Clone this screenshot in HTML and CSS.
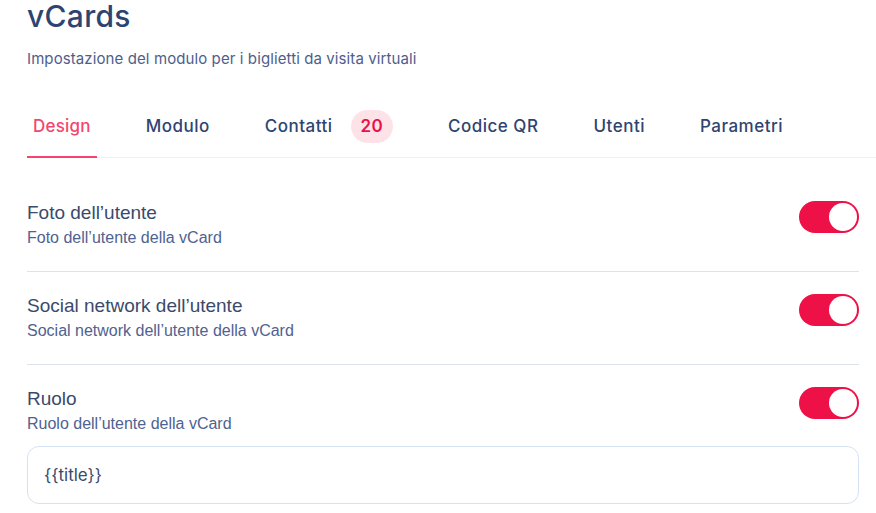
FILE: index.html
```html
<!DOCTYPE html>
<html lang="it">
<head>
<meta charset="utf-8">
<title>vCards</title>
<link rel="stylesheet" href="styles.css">
</head>
<body>
<main class="page">
  <header class="head">
    <h1 class="title">vCards</h1>
    <p class="subtitle">Impostazione del modulo per i biglietti da visita virtuali</p>
  </header>

  <nav class="tabs">
    <a class="tab active">Design</a>
    <a class="tab">Modulo</a>
    <a class="tab">Contatti <span class="badge">20</span></a>
    <a class="tab">Codice QR</a>
    <a class="tab">Utenti</a>
    <a class="tab">Parametri</a>
  </nav>

  <section class="settings">
    <div class="row">
      <div class="text">
        <div class="label">Foto dell’utente</div>
        <div class="desc">Foto dell’utente della vCard</div>
      </div>
      <span class="toggle on"><span class="knob"></span></span>
    </div>
    <div class="row">
      <div class="text">
        <div class="label">Social network dell’utente</div>
        <div class="desc">Social network dell’utente della vCard</div>
      </div>
      <span class="toggle on"><span class="knob"></span></span>
    </div>
    <div class="row last">
      <div class="main">
        <div class="top">
          <div class="text">
            <div class="label">Ruolo</div>
            <div class="desc">Ruolo dell’utente della vCard</div>
          </div>
          <span class="toggle on"><span class="knob"></span></span>
        </div>
        <div class="input">{{title}}</div>
      </div>
    </div>
  </section>
</main>
</body>
</html>
```

FILE: styles.css
```css
* { box-sizing: border-box; }
html, body { margin: 0; padding: 0; background: #ffffff; }
body { font-family: Inter, "Open Sans", sans-serif; overflow: hidden; }

.page {
  width: 832px;
  margin-left: 27px;
}

.title {
  margin: 0;
  font-size: 30px;
  line-height: 32px;
  font-weight: 500;
  color: #2e4470;
  letter-spacing: 0.3px;
}

.subtitle {
  margin: 17px 0 0;
  font-size: 15px;
  line-height: 20px;
  color: #4d5e8c;
  letter-spacing: 0.1px;
}

.tabs {
  margin-top: 31px;
  margin-right: -17px;
  display: flex;
  gap: 43px;
  border-bottom: 1px solid #edf0f6;
}

.tab {
  display: flex;
  align-items: center;
  gap: 18px;
  height: 58px;
  padding: 0 6px 4px;
  margin-bottom: -1px;
  border-bottom: 2px solid transparent;
  font-size: 17px;
  font-weight: 500;
  letter-spacing: 0.5px;
  color: #2f4470;
}

.tab.active {
  color: #f4466c;
  border-bottom-color: #f4466c;
  letter-spacing: 0.2px;
}

.badge {
  display: inline-flex;
  align-items: center;
  justify-content: center;
  height: 33px;
  padding: 0 10px;
  border-radius: 17px;
  background: #fde3e7;
  color: #e8124a;
  font-weight: 600;
  font-size: 17px;
  letter-spacing: 0.3px;
}

.settings { margin-top: 21px; }

.row {
  display: flex;
  justify-content: space-between;
  align-items: flex-start;
  padding: 22px 0 22px;
  border-bottom: 1px solid #dde3ee;
}

.row.last { border-bottom: none; padding-bottom: 0; }

.main { flex: 1; }
.top { display: flex; justify-content: space-between; align-items: flex-start; }

.label {
  font-family: "Liberation Sans", Arial, sans-serif;
  font-size: 19px;
  line-height: 24px;
  color: #3a4a6c;
}

.desc {
  margin-top: 2px;
  font-family: "Liberation Sans", Arial, sans-serif;
  font-size: 16px;
  line-height: 22px;
  color: #4f6290;
}

.toggle {
  width: 60px;
  height: 32px;
  border-radius: 16px;
  background: #ee1148;
  display: flex;
  align-items: center;
  justify-content: flex-end;
  padding: 2px;
  flex-shrink: 0;
}

.knob {
  width: 28px;
  height: 28px;
  border-radius: 50%;
  background: #ffffff;
}

.input {
  margin-top: 11px;
  height: 58px;
  border: 1px solid #d5e1f4;
  border-radius: 12px;
  padding: 0 16px;
  display: flex;
  align-items: center;
  font-size: 17px;
  color: #3a4a6c;
}
```
